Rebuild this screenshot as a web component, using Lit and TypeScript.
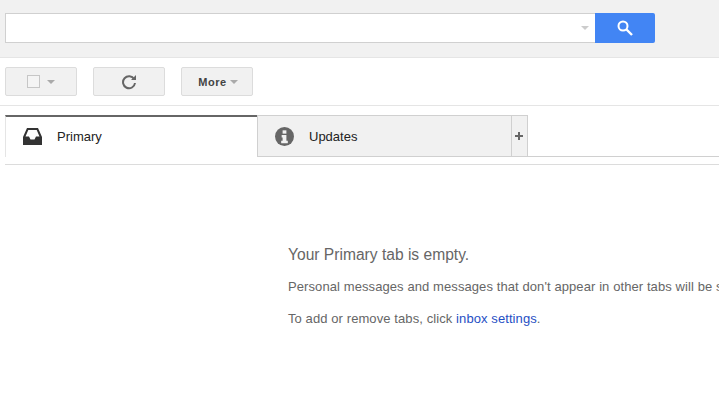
import { html, css, LitElement } from 'lit';
import { customElement } from 'lit/decorators.js';

@customElement('app-root')
export class AppRoot extends LitElement {
  static styles = css`
    :host {
      display: block;
      width: 719px;
      height: 409px;
      overflow: hidden;
      background: #fff;
      font-family: 'Liberation Sans', Arial, sans-serif;
    }

    .header {
      display: flex;
      height: 58px;
      box-sizing: border-box;
      padding: 13px 0 0 5px;
      background: #f1f1f1;
      border-bottom: 1px solid #e5e5e5;
    }

    .search {
      display: flex;
      justify-content: flex-end;
      align-items: center;
      width: 590px;
      height: 30px;
      box-sizing: border-box;
      padding-right: 6px;
      background: #fff;
      border: 1px solid #d0d0d0;
      border-right: none;
    }

    .search .caret {
      border-top-color: #ccc;
    }

    .search-btn {
      display: flex;
      align-items: center;
      justify-content: center;
      width: 60px;
      height: 30px;
      background: #4285f4;
      border-radius: 0 2px 2px 0;
    }

    .toolbar {
      display: flex;
      gap: 16px;
      height: 48px;
      box-sizing: border-box;
      padding: 9px 0 0 5px;
      border-bottom: 1px solid #e5e5e5;
    }

    .btn {
      display: flex;
      align-items: center;
      justify-content: center;
      width: 72px;
      height: 29px;
      box-sizing: border-box;
      background: #f1f1f1;
      border: 1px solid #dcdcdc;
      border-radius: 2px;
    }

    .check {
      width: 13px;
      height: 13px;
      box-sizing: border-box;
      margin-right: 7px;
      background: #f4f4f4;
      border: 1px solid #c6c6c6;
    }

    .more {
      margin: 0 3px 0 2px;
      font-size: 11px;
      font-weight: bold;
      letter-spacing: 0.6px;
      color: #444;
    }

    .caret {
      width: 0;
      height: 0;
      border-left: 4px solid transparent;
      border-right: 4px solid transparent;
      border-top: 4px solid #aaa;
    }

    .tabs {
      display: flex;
      height: 42px;
      margin: 9px 0 0 5px;
      font-size: 13px;
      color: #222;
    }

    .tab {
      display: flex;
      align-items: center;
      box-sizing: border-box;
      width: 252px;
      padding-left: 17px;
      gap: 15px;
    }

    .tab.primary {
      border-top: 2px solid #666;
      border-left: 1px solid #e5e5e5;
      padding-bottom: 2px;
    }

    .tab.updates {
      width: 254px;
      padding-left: 17px;
      background: #f1f1f1;
      border: 1px solid #d0d0d0;
      border-right: none;
    }

    .tab.add {
      justify-content: center;
      width: 17px;
      padding: 0 1px 0 0;
      background: #f1f1f1;
      border: 1px solid #d0d0d0;
    }

    .tab-rest {
      flex: 1;
      border-bottom: 1px solid #d0d0d0;
    }

    .divider {
      height: 1px;
      margin: 7px 0 0 5px;
      background: #dcdcdc;
    }

    .empty {
      margin: 81px 0 0 288px;
      white-space: nowrap;
      font-size: 13px;
      letter-spacing: 0.09px;
      color: #666;
    }

    .empty h2 {
      margin: 0 0 15px;
      font-size: 15.6px;
      font-weight: normal;
      letter-spacing: 0;
    }

    .empty p {
      margin: 0 0 17px;
    }

    .empty a {
      color: #1f4fc4;
      text-decoration: none;
    }
  `;

  render() {
    return html`
      <div class="header">
        <div class="search"><span class="caret"></span></div>
        <div class="search-btn">
          <svg width="16" height="16" viewBox="0 0 16 16" fill="none" stroke="#fff">
            <circle cx="6" cy="6" r="4.5" stroke-width="2"></circle>
            <path d="M9.5 9.5L15 15" stroke-width="2.4"></path>
          </svg>
        </div>
      </div>
      <div class="toolbar">
        <div class="btn"><span class="check"></span><span class="caret"></span></div>
        <div class="btn">
          <svg width="16" height="16" viewBox="0 0 16 16" fill="none">
            <path d="M13.2 5.2A6 6 0 1 0 14 9" stroke="#666" stroke-width="2"></path>
            <path d="M10 6h5V1z" fill="#666"></path>
          </svg>
        </div>
        <div class="btn"><span class="more">More</span><span class="caret"></span></div>
      </div>
      <div class="tabs">
        <div class="tab primary">
          <svg width="19" height="17" viewBox="0 0 19 17">
            <path fill="#333" fill-rule="evenodd" d="M4 0h11l4 9v8H0V9zM5.300 2L2.500 8.500H6l1.500 3h4l1.500-3h3.500L13.700 2z"></path>
          </svg>
          <span>Primary</span>
        </div>
        <div class="tab updates">
          <svg width="19" height="19" viewBox="0 0 20 20">
            <circle cx="10" cy="10" r="10" fill="#666"></circle>
            <rect x="8" y="3.500" width="4" height="3.500" fill="#f1f1f1"></rect>
            <path d="M7 8.500h5v6h1.500V17h-7v-2.500H8v-3.500H7z" fill="#f1f1f1"></path>
          </svg>
          <span>Updates</span>
        </div>
        <div class="tab add">
          <svg width="8" height="8" viewBox="0 0 8 8"><path d="M3 0h2v3h3v2H5v3H3V5H0V3h3z" fill="#666"></path></svg>
        </div>
        <div class="tab-rest"></div>
      </div>
      <div class="divider"></div>
      <div class="empty">
        <h2>Your Primary tab is empty.</h2>
        <p>Personal messages and messages that don't appear in other tabs will be shown here.</p>
        <p>To add or remove tabs, click <a href="#">inbox settings</a>.</p>
      </div>
    `;
  }
}
